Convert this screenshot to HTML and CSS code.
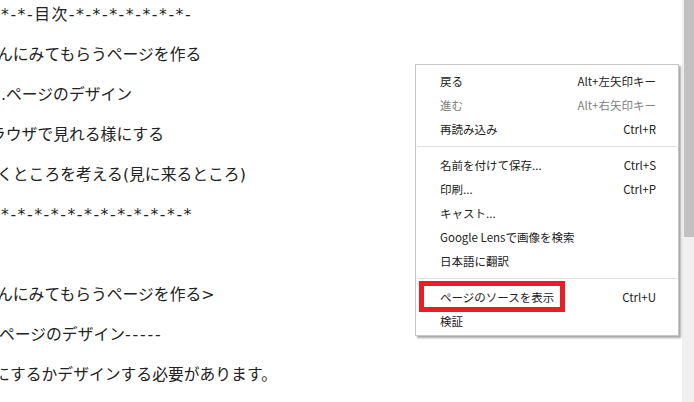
FILE: index.html
```html
<!DOCTYPE html>
<html>

<head>
    <title>目次</title>
    <link rel="stylesheet" href="styles.css">
</head>

<body>
    <div class="page">
        <p class="line stars shift-a">*-*-目次-*-*-*-*-*-*-*-</p>
        <p class="line shift-b">んにみてもらうページを作る</p>
        <p class="line shift-c">.ページのデザイン</p>
        <p class="line shift-d">ラウザで見れる様にする</p>
        <p class="line shift-e">くところを考える(見に来るところ)</p>
        <p class="line stars shift-a">*-*-*-*-*-*-*-*-*-*-*-*</p>
        <p class="line"></p>
        <p class="line shift-b">んにみてもらうページを作る&gt;</p>
        <p class="line shift-f">ページのデザイン<span class="dashes">-----</span></p>
        <p class="line shift-g">にするかデザインする必要があります。</p>
    </div>

    <div class="scrollbar">
        <div class="thumb"></div>
    </div>

    <div class="context-menu">
        <div class="item"><span>戻る</span><span class="key">Alt+左矢印キー</span></div>
        <div class="item disabled"><span>進む</span><span class="key">Alt+右矢印キー</span></div>
        <div class="item"><span>再読み込み</span><span class="key">Ctrl+R</span></div>
        <div class="sep"></div>
        <div class="item"><span>名前を付けて保存...</span><span class="key">Ctrl+S</span></div>
        <div class="item"><span>印刷...</span><span class="key">Ctrl+P</span></div>
        <div class="item"><span>キャスト...</span></div>
        <div class="item"><span>Google Lensで画像を検索</span></div>
        <div class="item"><span>日本語に翻訳</span></div>
        <div class="sep"></div>
        <div class="item"><span>ページのソースを表示</span><span class="key">Ctrl+U</span></div>
        <div class="item"><span>検証</span></div>

        <div class="highlight"></div>
    </div>
</body>

</html>
```

FILE: styles.css
```css
body {
    margin: 0;
    background: #fff;
    font-family: "Noto Sans CJK JP", "Noto Sans", sans-serif;
    overflow: hidden;
}

.page {
    color: #222;
    font-family: "DejaVu Sans", "Noto Sans CJK JP", sans-serif;
    font-size: 15.8px;
}

.line {
    margin: 0;
    height: 40px;
    line-height: 30px;
    white-space: nowrap;
}

.stars {
    letter-spacing: 1.5px;
}

.dashes {
    letter-spacing: 1.8px;
}

.shift-a { margin-left: 1px; }
.shift-b { margin-left: -3px; }
.shift-c { margin-left: 1px; }
.shift-d { margin-left: -10px; }
.shift-e { margin-left: -3px; }
.shift-f { margin-left: -1px; }
.shift-g { margin-left: -6px; }

.scrollbar {
    position: absolute;
    top: 0;
    right: 0;
    width: 12px;
    height: 402px;
    background: #f0f0f0;
}

.thumb {
    margin-left: 2px;
    height: 237px;
    background: #c1c1c1;
}

.context-menu {
    position: absolute;
    left: 415px;
    top: 64px;
    width: 262px;
    padding: 4px 0 2px;
    background: #fff;
    border: 1px solid #c6c6c6;
    box-shadow: 2px 2px 2px rgba(0, 0, 0, 0.35);
    font-size: 11.5px;
    color: #222;
}

.item {
    display: flex;
    justify-content: space-between;
    align-items: center;
    height: 24px;
    padding: 0 22px 0 24px;
}

.item.disabled {
    color: #808080;
}

.sep {
    height: 1px;
    margin: 5px 1px 6px;
    background: #e0e0e0;
}

.highlight {
    position: absolute;
    left: 3px;
    top: 216px;
    width: 136px;
    height: 21px;
    border: 5px solid #ed1c24;
}
```
